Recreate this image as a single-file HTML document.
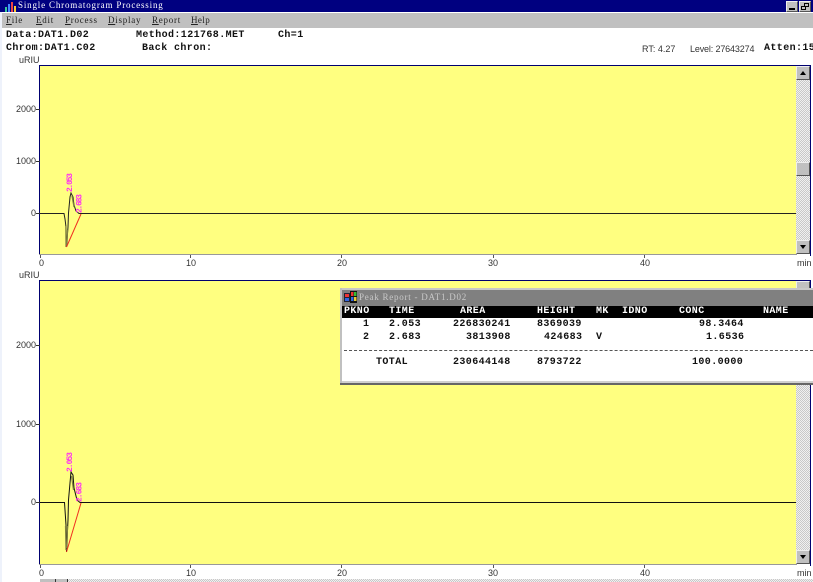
<!DOCTYPE html>
<html><head><meta charset="utf-8">
<style>
html,body{margin:0;padding:0;background:#fff}
body{position:relative;width:813px;height:582px;overflow:hidden;font-family:"Liberation Sans",sans-serif}
.a{position:absolute;white-space:pre;line-height:1}
.m{font-family:"Liberation Mono",monospace;font-weight:bold;font-size:10px;color:#111;letter-spacing:.4px}
.s{font-size:9px;color:#333}
.t{font-family:"Liberation Serif",serif;font-size:9px;letter-spacing:.75px;color:#222}
.r{font-family:"Liberation Mono",monospace;font-weight:bold;font-size:10px;color:#111;letter-spacing:.4px}
.btn{position:absolute;background:#c0c0c0;border-top:1px solid #eee;border-left:1px solid #eee;border-right:1px solid #555;border-bottom:1px solid #555;box-sizing:border-box}
.track{position:absolute;background-color:#e0e0e0;background-image:repeating-conic-gradient(#c8c8c8 0 25%,#f0f0f0 0 50%);background-size:2px 2px}
</style></head><body>
<div style="position:absolute;left:0;top:0;width:2px;height:582px;background:#eef2fb"></div>
<div style="position:absolute;left:0;top:0;width:813px;height:12px;background:#000080"></div>
<div style="position:absolute;left:2px;top:13px;width:811px;height:15px;background:#c0c0c0"></div>
<svg style="position:absolute;left:4px;top:1px" width="13" height="11"><rect x="1" y="6" width="2" height="5" fill="#3c9"/><rect x="4" y="3" width="2" height="8" fill="#48f"/><rect x="7" y="1" width="2" height="10" fill="#e44"/><rect x="10" y="5" width="2" height="6" fill="#fc3"/></svg>
<div class="a t" style="left:18px;top:1px;color:#fff;letter-spacing:.82px">Single Chromatogram Processing</div>
<div class="btn" style="left:786px;top:1px;width:12px;height:11px"><div style="position:absolute;left:2px;bottom:1px;width:6px;height:2px;background:#000"></div></div>
<div class="btn" style="left:799px;top:1px;width:12px;height:11px"><div style="position:absolute;left:4px;top:1px;width:5px;height:4px;border:1px solid #000;box-sizing:border-box"></div><div style="position:absolute;left:1px;top:4px;width:5px;height:4px;border:1px solid #000;box-sizing:border-box;background:#c0c0c0"></div></div>
<div class="a t" style="left:6px;top:16px"><u>F</u>ile</div>
<div class="a t" style="left:36px;top:16px"><u>E</u>dit</div>
<div class="a t" style="left:65px;top:16px"><u>P</u>rocess</div>
<div class="a t" style="left:108px;top:16px"><u>D</u>isplay</div>
<div class="a t" style="left:152px;top:16px"><u>R</u>eport</div>
<div class="a t" style="left:191px;top:16px;letter-spacing:.4px"><u>H</u>elp</div>
<div class="a m" style="left:6px;top:31px">Data:DAT1.D02</div>
<div class="a m" style="left:136px;top:31px">Method:121768.MET</div>
<div class="a m" style="left:278px;top:31px">Ch=1</div>
<div class="a m" style="left:6px;top:44px">Chrom:DAT1.C02</div>
<div class="a m" style="left:142px;top:44px">Back chron:</div>
<div class="a s" style="left:642px;top:45px">RT: 4.27</div>
<div class="a s" style="left:690px;top:45px;letter-spacing:-.15px">Level: 27643274</div>
<div class="a m" style="left:764px;top:44px">Atten:15</div>

<svg style="position:absolute;left:0;top:0" width="813" height="582">
<rect x="39.5" y="65.5" width="757" height="189" fill="#ffff80" stroke="none"/>
<path d="M39.5 65V255M39 65.5H810.5M810.5 65V256" stroke="#000070" fill="none"/>
<path d="M39 254.5H797" stroke="#999" fill="none"/>
<rect x="39.5" y="280.5" width="757" height="284" fill="#ffff80"/>
<path d="M39.5 280V565M39 280.5H810.5M810.5 280V566" stroke="#000070" fill="none"/>
<path d="M39 564.5H797" stroke="#999" fill="none"/>
<path d="M36 109.5H40M36 161.5H40M36 213.5H40M36 345.5H40M36 424.5H40M36 502.5H40" stroke="#333"/>
<path d="M40.5 255V258M190.5 255V258M341.5 255V258M493.5 255V258M644.5 255V258M40.5 565V568M190.5 565V568M341.5 565V568M493.5 565V568M644.5 565V568" stroke="#555"/>
<path d="M40 213.5H64L65 219L66 227L66.5 247L68 227L68.5 213L70 197L71 193L73 197L74 205L76 211L79 213.5H796" stroke="#222" fill="none"/>
<path d="M65.8 226L66 247M67 245L67.5 230M72 196L74 207" stroke="#808040" fill="none" stroke-width="1.2"/>
<path d="M66.5 247L81 214" stroke="#f03020" fill="none"/>
<path d="M40 502.5H64.5L65 510L66 525L66.5 552L68 520L68.5 500L70 483L71 472L73 475L74 488L77 500L80 502.5H796" stroke="#111" fill="none"/>
<path d="M65.5 526L66 550M67 548L67.5 526M71.5 476L73.5 490" stroke="#808040" fill="none" stroke-width="1.2"/>
<path d="M66.5 552L81 503" stroke="#f03020" fill="none"/>
<g font-family="Liberation Mono,monospace" font-size="8" font-weight="bold" fill="#ff30f0">
<text transform="translate(72,192) rotate(-90)" textLength="19">2.053</text>
<text transform="translate(81.5,213) rotate(-90)" textLength="19">2.683</text>
<text transform="translate(72,472) rotate(-90)" textLength="20">2.053</text>
<text transform="translate(81.5,502) rotate(-90)" textLength="20">2.683</text>
</g>
</svg>

<div class="a s" style="left:19px;top:56px">uRIU</div>
<div class="a s" style="left:19px;top:271px">uRIU</div>
<div class="a s" style="left:16px;top:105px">2000</div>
<div class="a s" style="left:16px;top:157px">1000</div>
<div class="a s" style="left:31px;top:209px">0</div>
<div class="a s" style="left:16px;top:341px">2000</div>
<div class="a s" style="left:16px;top:420px">1000</div>
<div class="a s" style="left:31px;top:498px">0</div>
<div class="a s" style="left:39px;top:259px">0</div>
<div class="a s" style="left:186px;top:259px">10</div>
<div class="a s" style="left:337px;top:259px">20</div>
<div class="a s" style="left:488px;top:259px">30</div>
<div class="a s" style="left:640px;top:259px">40</div>
<div class="a s" style="left:797px;top:259px">min</div>
<div class="a s" style="left:39px;top:569px">0</div>
<div class="a s" style="left:186px;top:569px">10</div>
<div class="a s" style="left:337px;top:569px">20</div>
<div class="a s" style="left:488px;top:569px">30</div>
<div class="a s" style="left:640px;top:569px">40</div>
<div class="a s" style="left:797px;top:569px">min</div>

<div class="track" style="left:796px;top:66px;width:14px;height:188px"></div>
<div class="btn" style="left:796px;top:66px;width:14px;height:14px"><div style="position:absolute;left:3px;top:4px;border:3px solid transparent;border-top:0;border-bottom:4px solid #000"></div></div>
<div class="btn" style="left:796px;top:162px;width:14px;height:14px"></div>
<div class="btn" style="left:796px;top:240px;width:14px;height:14px"><div style="position:absolute;left:3px;top:4px;border:3px solid transparent;border-bottom:0;border-top:4px solid #000"></div></div>
<div class="track" style="left:796px;top:281px;width:14px;height:283px"></div>
<div class="btn" style="left:796px;top:281px;width:14px;height:14px"></div>
<div class="btn" style="left:796px;top:550px;width:14px;height:14px"><div style="position:absolute;left:3px;top:4px;border:3px solid transparent;border-bottom:0;border-top:4px solid #000"></div></div>
<div class="track" style="left:40px;top:579px;width:773px;height:3px"></div>
<div style="position:absolute;left:40px;top:579px;width:15px;height:3px;background:#c0c0c0;border-right:1px solid #333"></div>
<div style="position:absolute;left:56px;top:579px;width:11px;height:3px;background:#c0c0c0;border-right:1px solid #333"></div>

<div style="position:absolute;left:340px;top:288px;width:473px;height:97px;background:#fff"></div>
<div style="position:absolute;left:340px;top:288px;width:473px;height:18px;background:#808080;border-top:2px solid #c8c8c8;box-sizing:border-box"></div>
<div style="position:absolute;left:340px;top:288px;width:2px;height:97px;background:#c0c0c0"></div>
<div style="position:absolute;left:340px;top:383px;width:473px;height:2px;background:#666"></div>
<div style="position:absolute;left:342px;top:381px;width:471px;height:2px;background:#d0d0d0"></div>
<svg style="position:absolute;left:344px;top:291px" width="14" height="13"><rect x="0" y="2" width="6" height="9" fill="#223"/><rect x="1" y="3" width="4" height="3" fill="#e33"/><rect x="1" y="7" width="4" height="3" fill="#36d"/><rect x="6" y="0" width="7" height="12" fill="#111"/><rect x="7" y="1" width="2.5" height="4" fill="#e33"/><rect x="10" y="1" width="2.5" height="4" fill="#3b3"/><rect x="7" y="6" width="2.5" height="4" fill="#36d"/><rect x="10" y="6" width="2.5" height="4" fill="#ec3"/></svg>
<div class="a t" style="left:359px;top:293px;color:#c8c8c8">Peak Report - DAT1.D02</div>
<div style="position:absolute;left:342px;top:306px;width:471px;height:12px;background:#000"></div>
<div class="a r" style="left:344px;top:307px;color:#fff">PKNO</div>
<div class="a r" style="left:389px;top:307px;color:#fff">TIME</div>
<div class="a r" style="left:460px;top:307px;color:#fff">AREA</div>
<div class="a r" style="left:537px;top:307px;color:#fff">HEIGHT</div>
<div class="a r" style="left:596px;top:307px;color:#fff">MK</div>
<div class="a r" style="left:622px;top:307px;color:#fff">IDNO</div>
<div class="a r" style="left:679px;top:307px;color:#fff">CONC</div>
<div class="a r" style="left:763px;top:307px;color:#fff">NAME</div>
<div class="a r" style="left:363px;top:320px">1</div>
<div class="a r" style="left:389px;top:320px">2.053</div>
<div class="a r" style="left:453px;top:320px">226830241</div>
<div class="a r" style="left:537px;top:320px">8369039</div>
<div class="a r" style="left:699px;top:320px">98.3464</div>
<div class="a r" style="left:363px;top:333px">2</div>
<div class="a r" style="left:389px;top:333px">2.683</div>
<div class="a r" style="left:466px;top:333px">3813908</div>
<div class="a r" style="left:544px;top:333px">424683</div>
<div class="a r" style="left:596px;top:333px">V</div>
<div class="a r" style="left:706px;top:333px">1.6536</div>
<div style="position:absolute;left:344px;top:350px;width:469px;border-top:1px dashed #555"></div>
<div class="a r" style="left:376px;top:358px">TOTAL</div>
<div class="a r" style="left:453px;top:358px">230644148</div>
<div class="a r" style="left:537px;top:358px">8793722</div>
<div class="a r" style="left:692px;top:358px">100.0000</div>
</body></html>
